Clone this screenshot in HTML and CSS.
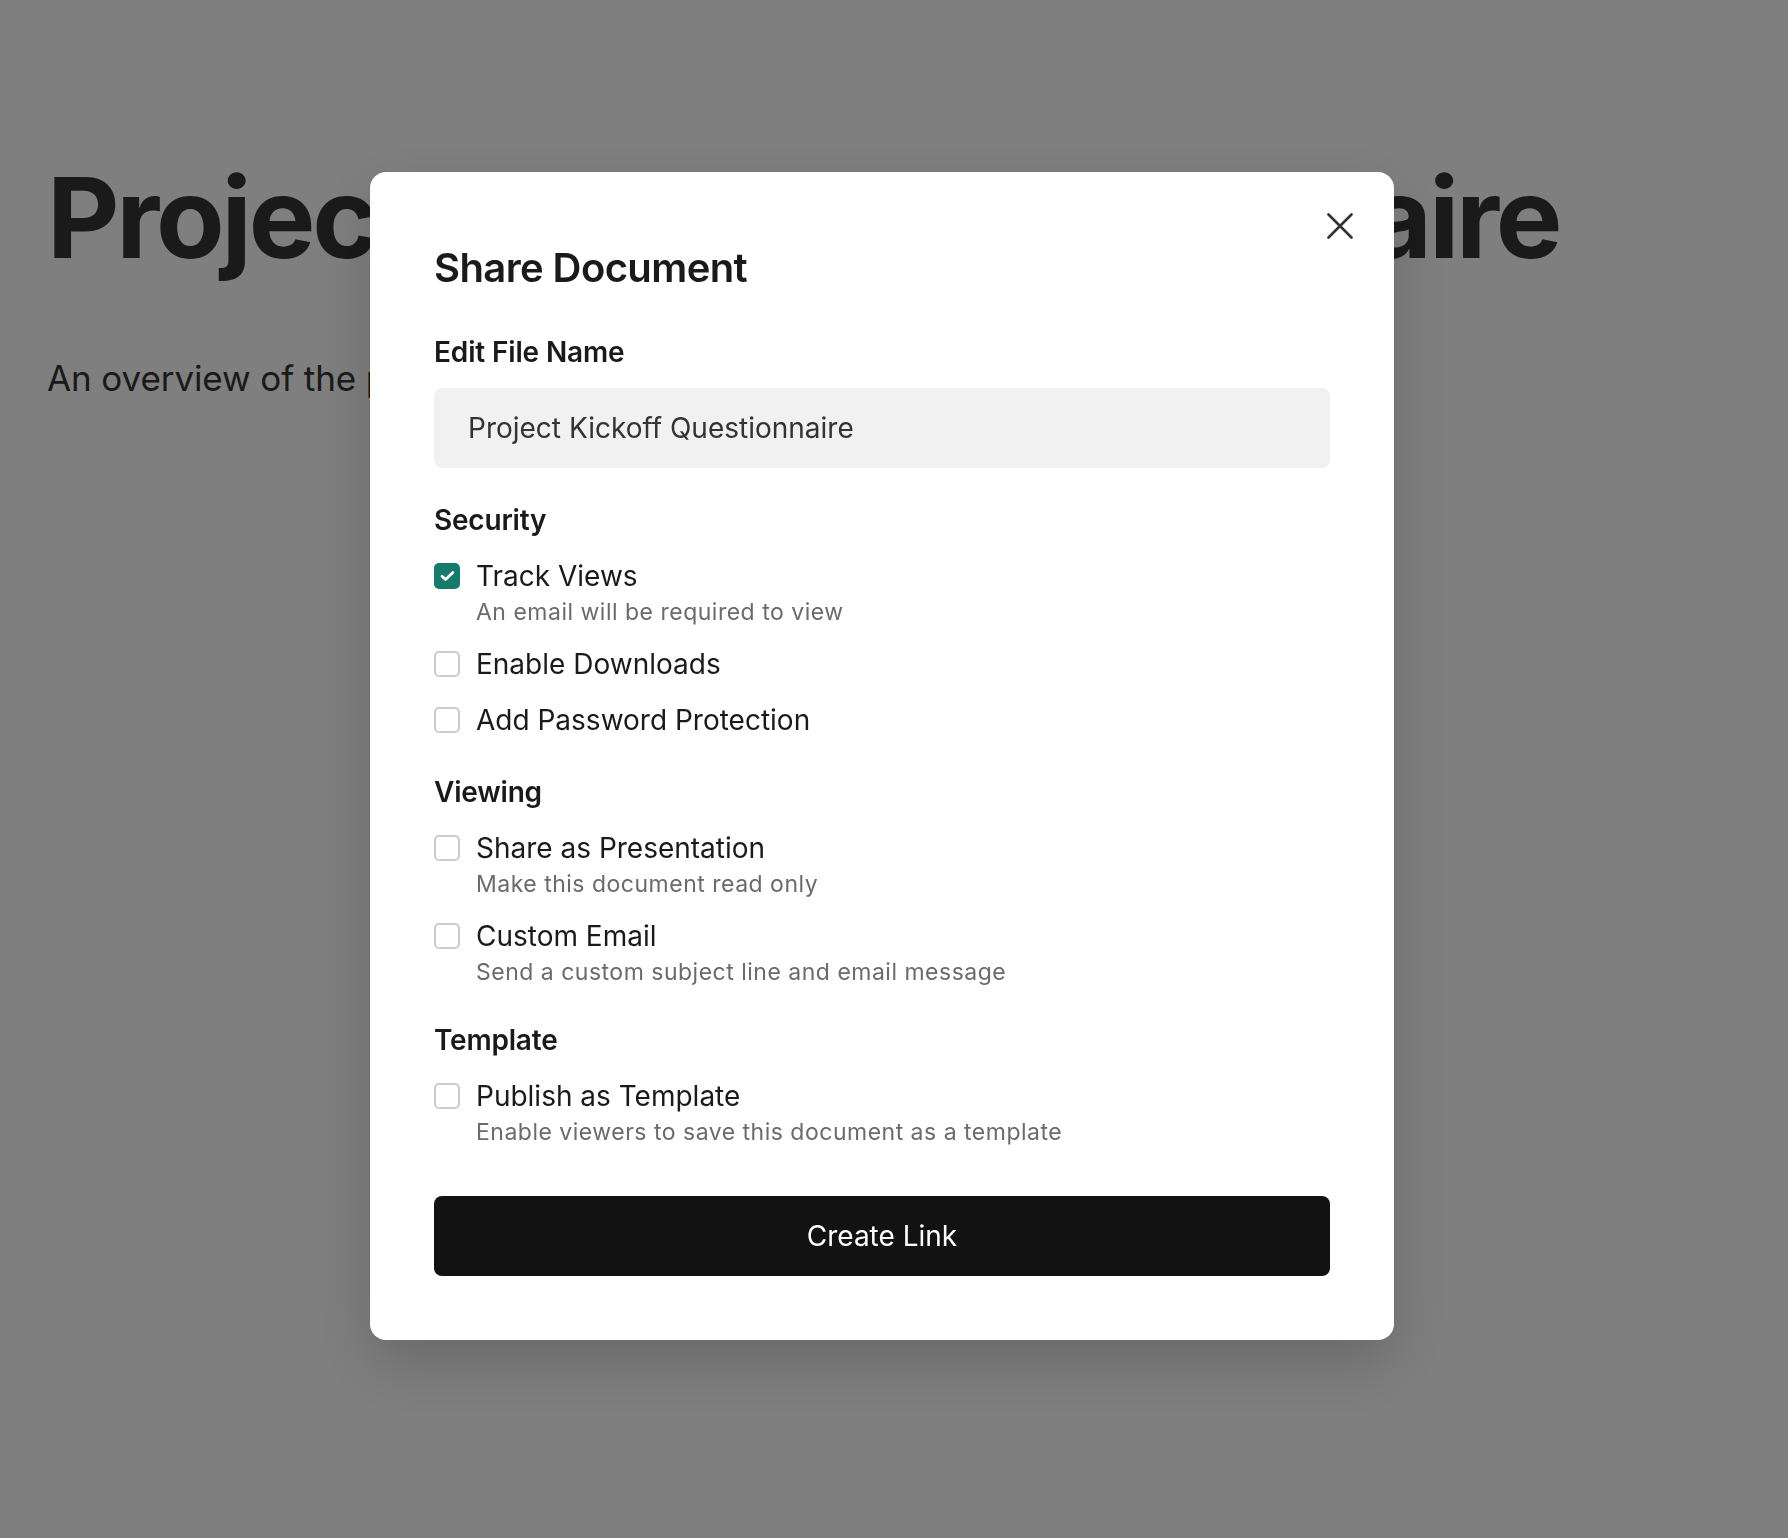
FILE: index.html
```html
<!DOCTYPE html>
<html lang="en">
<head>
<meta charset="utf-8">
<title>Share Document</title>
<link rel="stylesheet" href="styles.css">
</head>
<body>
<main class="page">
  <h1 class="page-title">Project Kickoff Questionnaire</h1>
  <p class="page-sub">An overview of the project goals, timeline and stakeholders</p>
</main>

<div class="overlay">
  <section class="modal">
    <button class="close" aria-label="Close">
      <svg width="26" height="26" viewBox="0 0 26 26"><path d="M1.5 1.5 L24.5 24.5 M24.5 1.5 L1.5 24.5" stroke="#333" stroke-width="2.6" stroke-linecap="round" fill="none"/></svg>
    </button>
    <h2 class="modal-title">Share Document</h2>

    <label class="field-label" for="fname">Edit File Name</label>
    <input id="fname" class="text-input" type="text" value="Project Kickoff Questionnaire">

    <div class="section">
      <h3 class="section-title">Security</h3>
      <div class="options">
        <div class="option">
          <div class="opt-row"><span class="box checked"><svg width="15" height="12" viewBox="0 0 15 12"><path d="M2 6.2 L5.6 9.6 L12.8 2.4" stroke="#fff" stroke-width="2.8" stroke-linecap="round" stroke-linejoin="round" fill="none"/></svg></span><span class="opt-label">Track Views</span></div>
          <div class="opt-desc">An email will be required to view</div>
        </div>
        <div class="option">
          <div class="opt-row"><span class="box"></span><span class="opt-label">Enable Downloads</span></div>
        </div>
        <div class="option">
          <div class="opt-row"><span class="box"></span><span class="opt-label">Add Password Protection</span></div>
        </div>
      </div>
    </div>

    <div class="section">
      <h3 class="section-title">Viewing</h3>
      <div class="options">
        <div class="option">
          <div class="opt-row"><span class="box"></span><span class="opt-label">Share as Presentation</span></div>
          <div class="opt-desc">Make this document read only</div>
        </div>
        <div class="option">
          <div class="opt-row"><span class="box"></span><span class="opt-label">Custom Email</span></div>
          <div class="opt-desc">Send a custom subject line and email message</div>
        </div>
      </div>
    </div>

    <div class="section">
      <h3 class="section-title">Template</h3>
      <div class="options">
        <div class="option">
          <div class="opt-row"><span class="box"></span><span class="opt-label">Publish as Template</span></div>
          <div class="opt-desc">Enable viewers to save this document as a template</div>
        </div>
      </div>
    </div>

    <button class="primary">Create Link</button>
  </section>
</div>
</body>
</html>
```

FILE: styles.css
```css
* { box-sizing: border-box; }
html, body { margin: 0; padding: 0; }
body {
  width: 1788px;
  height: 1538px;
  overflow: hidden;
  background: #fff;
  font-family: Inter, "Noto Sans", sans-serif;
  color: #1a1a1a;
}
.page {
  padding: 150px 48px 0 47px;
}
.page-title {
  margin: 0;
  font-size: 112px;
  line-height: 1.2;
  font-weight: 700;
  color: #343434;
  letter-spacing: -3.2px;
  white-space: nowrap;
}
.page-sub {
  margin: 68px 0 0;
  font-size: 35px;
  line-height: 1.5;
  font-weight: 400;
  color: #343434;
  letter-spacing: -0.1px;
  white-space: nowrap;
}
.overlay {
  position: fixed;
  inset: 0;
  background: rgba(0, 0, 0, 0.5);
  display: flex;
  align-items: center;
  justify-content: center;
  padding: 0 24px 27px 0;
}
.modal {
  position: relative;
  width: 1024px;
  background: #fff;
  border-radius: 16px;
  padding: 64px;
  display: flex;
  flex-direction: column;
  box-shadow: 0 24px 60px rgba(0, 0, 0, 0.18);
}
.close {
  position: absolute;
  top: 41px;
  right: 41px;
  width: 26px;
  height: 26px;
  padding: 0;
  border: 0;
  background: none;
  display: block;
}
.close svg { display: block; }
.modal-title {
  margin: 0 0 32px;
  font-size: 40px;
  line-height: 64px;
  font-weight: 600;
  color: #1a1a1a;
  letter-spacing: -0.6px;
}
.field-label {
  display: block;
  font-size: 28px;
  line-height: 40px;
  font-weight: 600;
  color: #1a1a1a;
  letter-spacing: -0.15px;
  margin-bottom: 16px;
}
.text-input {
  display: block;
  width: 100%;
  height: 80px;
  border: 0;
  border-radius: 8px;
  background: #f1f1f1;
  padding: 0 32px 0 34px;
  font-family: inherit;
  font-size: 28px;
  color: #333;
  outline: none;
}
.section {
  margin-top: 32px;
}
.section-title {
  margin: 0 0 16px;
  font-size: 28px;
  line-height: 40px;
  font-weight: 600;
  color: #1a1a1a;
  letter-spacing: -0.2px;
}
.options {
  display: flex;
  flex-direction: column;
  gap: 16px;
}
.opt-row {
  display: flex;
  align-items: center;
  gap: 16px;
  height: 40px;
}
.box {
  flex: none;
  width: 26px;
  height: 26px;
  border: 2px solid #cdcdcd;
  border-radius: 5px;
  background: #fff;
  display: flex;
  align-items: center;
  justify-content: center;
}
.box.checked {
  background: #167a6c;
  border-color: #167a6c;
}
.box svg { display: block; }
.opt-label {
  font-size: 28px;
  line-height: 40px;
  font-weight: 400;
  color: #1a1a1a;
}
.opt-desc {
  padding-left: 42px;
  font-size: 23px;
  line-height: 32px;
  color: #6b6b6b;
  letter-spacing: 0.5px;
}
.primary {
  margin-top: 48px;
  height: 80px;
  width: 100%;
  border: 0;
  border-radius: 8px;
  background: #121212;
  color: #fff;
  font-family: inherit;
  font-size: 28px;
  font-weight: 400;
}
```
